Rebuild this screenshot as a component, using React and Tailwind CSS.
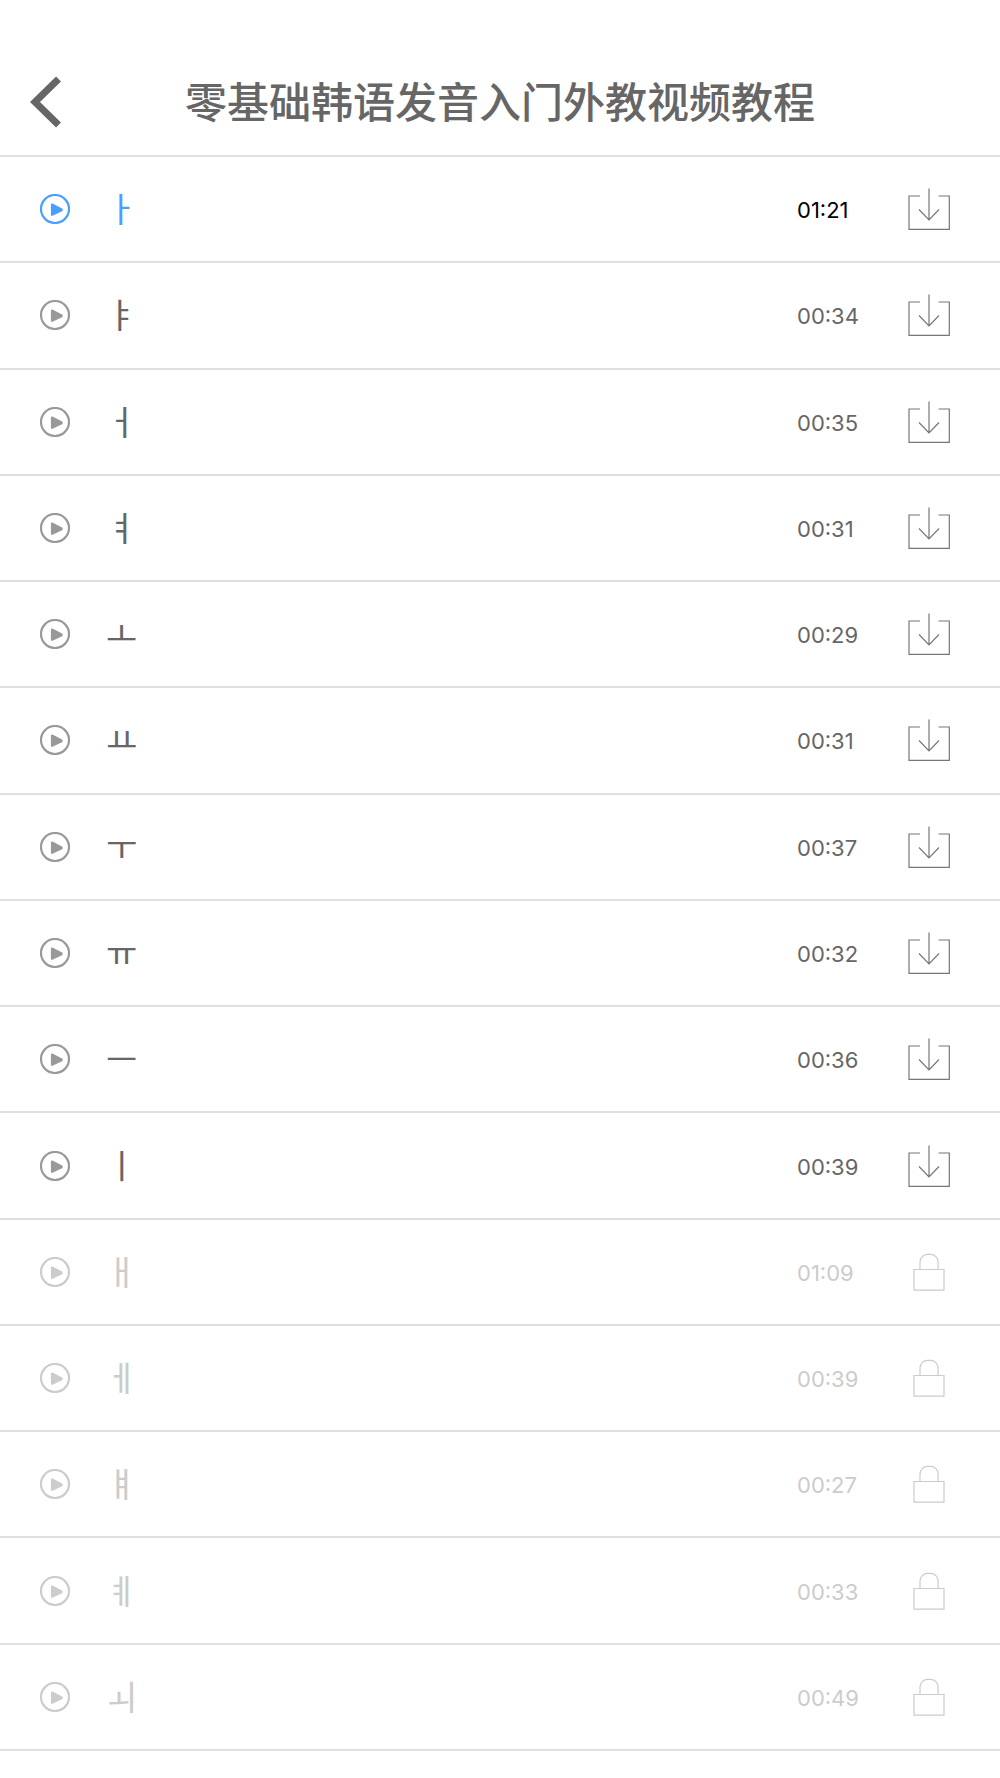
import React from "react";
import clsx from "clsx";

const lessons = [
    { title: "ㅏ", time: "01:21", state: "active" },
    { title: "ㅑ", time: "00:34", state: "open" },
    { title: "ㅓ", time: "00:35", state: "open" },
    { title: "ㅕ", time: "00:31", state: "open" },
    { title: "ㅗ", time: "00:29", state: "open" },
    { title: "ㅛ", time: "00:31", state: "open" },
    { title: "ㅜ", time: "00:37", state: "open" },
    { title: "ㅠ", time: "00:32", state: "open" },
    { title: "ㅡ", time: "00:36", state: "open" },
    { title: "ㅣ", time: "00:39", state: "open" },
    { title: "ㅐ", time: "01:09", state: "locked" },
    { title: "ㅔ", time: "00:39", state: "locked" },
    { title: "ㅒ", time: "00:27", state: "locked" },
    { title: "ㅖ", time: "00:33", state: "locked" },
    { title: "ㅚ", time: "00:49", state: "locked" },
];

const iconColor = {
    active: "text-[#4a9eff]",
    open: "text-[#999999]",
    locked: "text-[#cccccc]",
};

const titleColor = {
    active: "text-[#4a9eff]",
    open: "text-[#666666]",
    locked: "text-[#cccccc]",
};

const timeColor = {
    active: "text-black",
    open: "text-[#666666]",
    locked: "text-[#cccccc]",
};

const PlayIcon = ({ className }) => (
    <svg className={className} viewBox="0 0 30 30" fill="none">
        <circle cx="15" cy="15" r="14" stroke="currentColor" strokeWidth="2.2" />
        <path
            d="M12 10.6v10.2l9.6-4.6v-.8z"
            fill="currentColor"
            stroke="currentColor"
            strokeWidth="2.2"
            strokeLinejoin="round"
        />
    </svg>
);

const DownloadIcon = () => (
    <svg className="w-[42px] h-[42px]" viewBox="0 0 42 42" fill="none" stroke="currentColor" strokeWidth="1.2">
        <path d="M12 8H1v33.3h40.3V8H30.5" />
        <path d="M21 .5v31.5M11 21.5L21 31.8l10-10.3" />
    </svg>
);

const LockIcon = () => (
    <svg className="w-[32px] h-[38px]" viewBox="0 0 32 38" fill="none" stroke="currentColor" strokeWidth="1.2">
        <path d="M1 16.5h30v20.7H1z" />
        <path d="M7 16.5V9a7.6 7.6 0 0 1 7.6-7.6h2.9A7.6 7.6 0 0 1 25.1 9v7.5" />
    </svg>
);

const LessonRow = ({ title, time, state }) => {
    const locked = state === "locked";

    return (
        <li className="flex-1 flex items-center border-b-2 border-[#dfdfdf] pl-10 pr-[50px]">
            <button type="button" disabled={locked} className="flex-1 flex items-center gap-9 text-left">
                <PlayIcon className={clsx("w-[30px] h-[30px]", iconColor[state])} />
                <span className={clsx("pb-0.5 text-[34px] leading-10 font-['Noto_Sans_CJK_KR',sans-serif]", titleColor[state])}>
                    {title}
                </span>
            </button>
            <span className={clsx("w-[111px] pt-0.5 text-[22px] leading-8 font-[Inter,sans-serif]", timeColor[state])}>
                {time}
            </span>
            <button
                type="button"
                disabled={locked}
                aria-label={locked ? "未解锁" : "下载"}
                className={clsx("w-[42px] h-[42px] flex items-center justify-center", locked ? "text-[#cccccc]" : "text-[#777777]")}
            >
                {locked ? <LockIcon /> : <DownloadIcon />}
            </button>
        </li>
    );
};

const App = () => {
    return (
        <div className="min-h-screen flex flex-col bg-white pb-[27px]">
            <header className="grid grid-cols-[1fr_auto_1fr] items-center border-b-2 border-[#dfdfdf] pt-[72px] pb-[23px] px-[30px]">
                <button type="button" aria-label="返回" className="w-8 text-[#666666]">
                    <svg className="w-8 h-[52px]" viewBox="0 0 32 52" fill="none" stroke="currentColor" strokeWidth="7">
                        <path d="M28.5 3L5 26 28.5 49" />
                    </svg>
                </button>
                <h1 className="pb-1 text-[42px] leading-[56px] font-medium text-[#666666] font-['Noto_Sans_CJK_SC',sans-serif]">
                    零基础韩语发音入门外教视频教程
                </h1>
            </header>
            <ul className="flex-1 flex flex-col">
                {lessons.map((lesson) => (
                    <LessonRow key={lesson.title} {...lesson} />
                ))}
            </ul>
        </div>
    );
};

export default App;
